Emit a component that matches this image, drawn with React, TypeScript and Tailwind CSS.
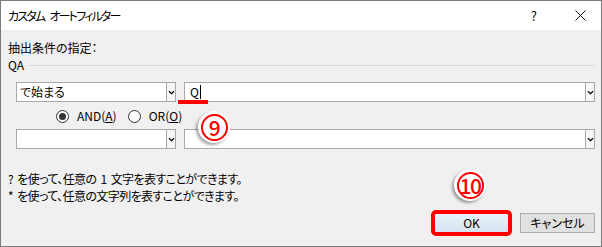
import React from 'react';

const Chevron: React.FC = () => (
  <svg width="7" height="5" viewBox="0 0 7 5" className="text-black">
    <path d="M1 1.2 L3.5 3.6 L6 1.2" fill="none" stroke="currentColor" strokeWidth="1.2" />
  </svg>
);

const Combo: React.FC<{ value?: string; className?: string; caret?: boolean }> = ({ value, className, caret }) => (
  <div className={`flex h-[20px] bg-white border border-[#a8a8a8] ${className ?? ''}`}>
    <div className="flex-1 flex items-center pl-[3px] text-[12px] leading-none">
      {value}
      {caret && <span className="ml-[1px] w-px h-[14px] bg-black" />}
    </div>
    <div className="w-[9px] flex items-center justify-center border-l border-[#a8a8a8] bg-[#f6f6f6]">
      <Chevron />
    </div>
  </div>
);

const Radio: React.FC<{ checked?: boolean }> = ({ checked }) => (
  <span className="w-[13px] h-[13px] rounded-full border border-[#333] bg-white flex items-center justify-center">
    {checked && <span className="w-[7px] h-[7px] rounded-full bg-[#333]" />}
  </span>
);

const Marker: React.FC<{ label: string; className: string }> = ({ label, className }) => (
  <div className={`absolute w-[32px] h-[32px] rounded-full bg-white shadow-[-2px_2px_3px_rgba(0,0,0,0.35)] flex items-center justify-center ${className}`}>
    <div className="w-[27px] h-[27px] rounded-full border-2 border-[#ff0000] flex items-center justify-center text-[#ff0000] text-[21px] font-medium leading-none tracking-[-1.5px]">
      {label}
    </div>
  </div>
);

const App: React.FC = () => {
  return (
    <div className="relative w-[602px] h-[247px] border border-[#7a7a7a] bg-[#f0f0f0] text-black text-[12px] font-['Yu_Gothic_UI','Noto_Sans_CJK_JP',sans-serif] [font-feature-settings:'palt'] flex flex-col overflow-hidden">
      <div className="h-[29px] bg-white flex items-center pl-[7px] pr-[15px] shrink-0">
        <span className="flex-1 tracking-[-1.8px] [word-spacing:4px]">カスタム オートフィルター</span>
        <span className="text-[13px] mr-[38px]">?</span>
        <svg width="11" height="11" viewBox="0 0 11 11">
          <path d="M0.5 0.5 L10.5 10.5 M10.5 0.5 L0.5 10.5" stroke="#111" strokeWidth="1" />
        </svg>
      </div>

      <div className="flex flex-col">
        <div className="pl-[7px] pt-[10px] leading-[16px]">抽出条件の指定：</div>
        <div className="flex items-center pl-[7px] pr-[6px] mt-[1px] h-[16px]">
          <span>QA</span>
          <div className="ml-[5px] flex-1 h-px bg-[#d8d8d8]" />
        </div>

        <div className="flex mt-[9px] pl-[15px] pr-[6px] gap-[8px]">
          <Combo value="で始まる" className="w-[160px]" />
          <Combo value="Q" caret className="flex-1 pl-[2px]" />
        </div>

        <div className="flex items-center h-[20px] mt-[4px] pl-[55px]">
          <Radio checked />
          <span className="ml-[8px]">AND(<span className="underline">A</span>)</span>
          <span className="ml-[11px]"><Radio /></span>
          <span className="ml-[8px]">OR(<span className="underline">O</span>)</span>
        </div>

        <div className="flex mt-[3px] pl-[15px] pr-[6px] gap-[8px]">
          <Combo className="w-[160px]" />
          <Combo className="flex-1" />
        </div>

        <div className="pl-[7px] mt-[21px] leading-[17px] tracking-[-0.6px] [word-spacing:2px]">
          <div>? を使って、任意の 1 文字を表すことができます。</div>
          <div>* を使って、任意の文字列を表すことができます。</div>
        </div>

        <div className="flex justify-end gap-[11px] pr-[6px] mt-[9px]">
          <div className="relative">
            <button className="w-[75px] h-[20px] bg-gradient-to-b from-[#e8f1f9] to-[#d6e5f2] border border-[#4f8fd0] text-[12px] leading-none">OK</button>
            <span className="absolute -inset-[3px] border-4 border-[#ff0000] rounded-[5px]" />
          </div>
          <button className="w-[75px] h-[20px] bg-[#e1e1e1] border border-[#adadad] text-[12px] leading-none">キャンセル</button>
        </div>
      </div>

      <span className="absolute left-[177px] top-[99px] w-[30px] h-[4px] bg-[#ff0000]" />
      <Marker label="9" className="left-[197px] top-[110px]" />
      <Marker label="10" className="left-[453px] top-[168px]" />
    </div>
  );
};

export default App;
